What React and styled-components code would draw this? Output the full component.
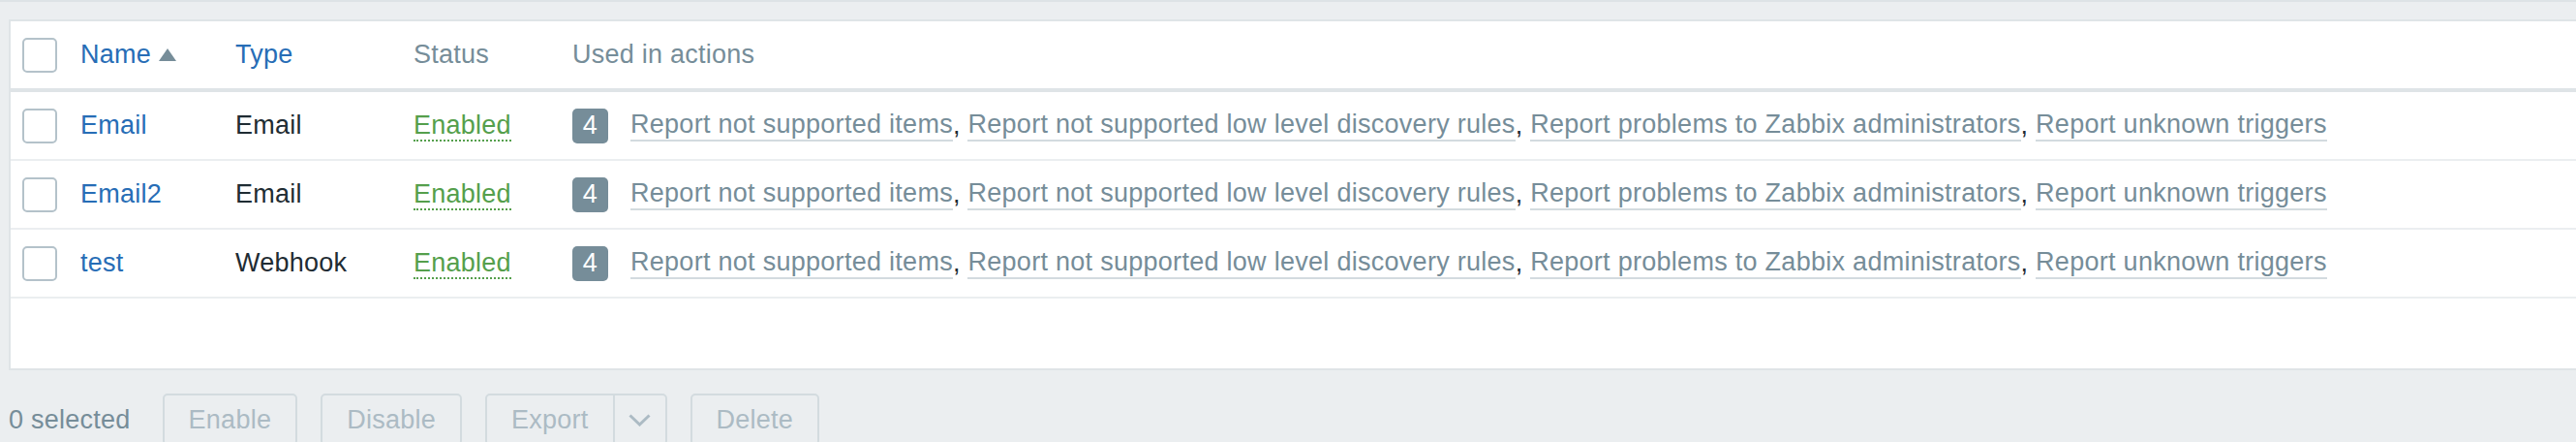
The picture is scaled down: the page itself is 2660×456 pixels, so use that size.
import React from "react";
import styled, { createGlobalStyle } from "styled-components";

const GlobalStyle = createGlobalStyle`
  html, body {
    margin: 0;
    padding: 0;
    background: #ebeef0;
    overflow: hidden;
  }
  body {
    font-family: "Liberation Sans", Arial, sans-serif;
    font-size: 27px;
    line-height: 31px;
    letter-spacing: 0.25px;
    color: #1f2c33;
  }
`;

const Page = styled.div`
  border-top: 2px solid #dde3e6;
  padding-top: 18px;
`;

const Panel = styled.div`
  margin-left: 9px;
  background: #fff;
  border: 2px solid #dfe4e7;
  border-right: none;
`;

const Row = styled.div`
  display: grid;
  grid-template-columns: 60px 160px 184px 164px 1fr;
  align-items: center;
  padding-left: 12px;
  height: 69px;
  border-bottom: ${(p) => (p.$head ? "4px solid #dfe4e7" : "2px solid #ebeef0")};
  white-space: nowrap;
`;

const Filler = styled.div`
  height: 72px;
`;

const Checkbox = styled.span`
  display: block;
  width: 36px;
  height: 36px;
  box-sizing: border-box;
  border: 2px solid #b4c2ca;
  border-radius: 5px;
  background: #fff;
`;

const HeadLink = styled.span`
  color: #276db6;
  display: inline-flex;
  align-items: center;
  gap: 8px;
`;

const HeadText = styled.span`
  color: #768d99;
`;

const NameLink = styled.span`
  color: #276db6;
`;

const Status = styled.span`
  color: #559f4c;
  border-bottom: 2px dotted #559f4c;
`;

const Actions = styled.div`
  display: flex;
  align-items: center;
`;

const Count = styled.span`
  display: inline-flex;
  align-items: center;
  justify-content: center;
  width: 37px;
  height: 36px;
  margin-right: 23px;
  border-radius: 5px;
  background: #768d99;
  color: #fff;
`;

const ActionLink = styled.span`
  color: #768d99;
  letter-spacing: 0.28px;
  border-bottom: 2px solid #d3dbdf;
`;

const Sep = styled.span`
  color: #1f2c33;
  white-space: pre;
`;

const Footer = styled.div`
  display: flex;
  align-items: center;
  margin-top: 24px;
  padding-left: 9px;
`;

const Selected = styled.span`
  color: #768d99;
  margin-right: 33px;
`;

const Buttons = styled.div`
  display: flex;
  gap: 24px;
`;

const Button = styled.button`
  height: 54px;
  padding: 0 25px;
  font: inherit;
  letter-spacing: inherit;
  color: #acbbc4;
  background: #ebeef0;
  border: 2px solid #d3dbdf;
  border-radius: 5px;
`;

const SplitButton = styled.div`
  display: flex;
  height: 54px;
  box-sizing: border-box;
  border: 2px solid #d3dbdf;
  border-radius: 5px;
  background: #ebeef0;
  color: #acbbc4;
`;

const SplitMain = styled.span`
  display: flex;
  align-items: center;
  padding: 0 25px;
  border-right: 2px solid #d3dbdf;
`;

const SplitToggle = styled.span`
  display: flex;
  align-items: center;
  justify-content: center;
  width: 52px;
`;

const SortUp = () => (
  <svg width="18" height="13" viewBox="0 0 18 13">
    <polygon points="9,0 18,13 0,13" fill="#768d99" />
  </svg>
);

const Chevron = () => (
  <svg width="23" height="13" viewBox="0 0 23 13">
    <polyline points="1.5,1.5 11.5,11 21.5,1.5" fill="none" stroke="#acbbc4" strokeWidth="3" />
  </svg>
);

const actions = [
  "Report not supported items",
  "Report not supported low level discovery rules",
  "Report problems to Zabbix administrators",
  "Report unknown triggers",
];

const mediaTypes = [
  { name: "Email", type: "Email" },
  { name: "Email2", type: "Email" },
  { name: "test", type: "Webhook" },
];

export default function App() {
  return (
    <>
      <GlobalStyle />
      <Page>
        <Panel>
          <Row $head>
            <Checkbox />
            <span>
              <HeadLink>
                Name <SortUp />
              </HeadLink>
            </span>
            <span>
              <HeadLink>Type</HeadLink>
            </span>
            <HeadText>Status</HeadText>
            <HeadText>Used in actions</HeadText>
          </Row>
          {mediaTypes.map((m) => (
            <Row key={m.name}>
              <Checkbox />
              <span>
                <NameLink>{m.name}</NameLink>
              </span>
              <span>{m.type}</span>
              <span>
                <Status>Enabled</Status>
              </span>
              <Actions>
                <Count>{actions.length}</Count>
                {actions.map((a, i) => (
                  <React.Fragment key={a}>
                    <ActionLink>{a}</ActionLink>
                    {i < actions.length - 1 && <Sep>, </Sep>}
                  </React.Fragment>
                ))}
              </Actions>
            </Row>
          ))}
          <Filler />
        </Panel>
        <Footer>
          <Selected>0 selected</Selected>
          <Buttons>
            <Button disabled>Enable</Button>
            <Button disabled>Disable</Button>
            <SplitButton>
              <SplitMain>Export</SplitMain>
              <SplitToggle>
                <Chevron />
              </SplitToggle>
            </SplitButton>
            <Button disabled>Delete</Button>
          </Buttons>
        </Footer>
      </Page>
    </>
  );
}
